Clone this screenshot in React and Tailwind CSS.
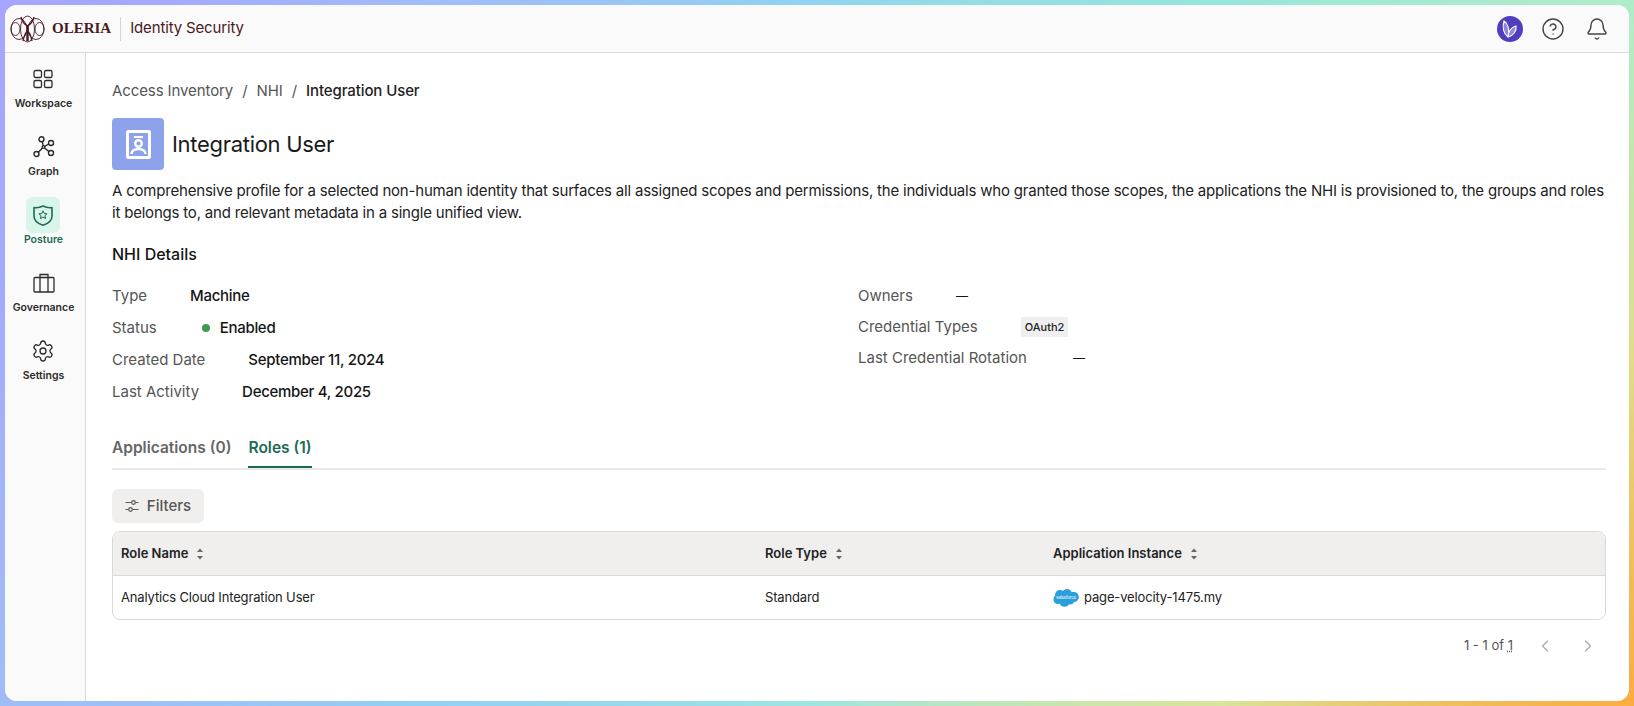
import { Bell, ChevronLeft, ChevronRight, CircleHelp, Settings } from "lucide-react";

const sans = "font-['Inter','Noto_Sans',sans-serif]";

function Logo() {
  return (
    <svg width="35" height="28" viewBox="0 0 35 28" fill="none" stroke="#4a1a22" strokeWidth="0.9">
      <ellipse cx="17.500" cy="14" rx="7" ry="13" />
      <ellipse cx="9" cy="14" rx="8" ry="10.500" />
      <ellipse cx="26" cy="14" rx="8" ry="10.500" />
      <ellipse cx="5.500" cy="14" rx="4.500" ry="6.500" />
      <ellipse cx="29.500" cy="14" rx="4.500" ry="6.500" />
      <path d="M17.500 10v16" strokeWidth="2.400" />
      <path d="M11 2c1 4 3 7 6.500 9M24 2c-1 4-3 7-6.500 9M13 26c1-5 2-8 4.500-10M22 26c-1-5-2-8-4.500-10" strokeWidth="1.400" />
    </svg>
  );
}

function WorkspaceIcon() {
  return (
    <svg width="20" height="20" viewBox="0 0 20 20" fill="none" stroke="#2b2b2b" strokeWidth="1.3">
      <rect x="1" y="1.500" width="7.500" height="7" rx="1.600" />
      <rect x="11.500" y="1.500" width="7.500" height="7" rx="1.600" />
      <rect x="1" y="11.500" width="7.500" height="7" rx="1.600" />
      <rect x="11.500" y="11.500" width="7.500" height="7" rx="1.600" />
    </svg>
  );
}

function GraphIcon() {
  return (
    <svg width="22" height="22" viewBox="0 0 22 22" fill="none" stroke="#2b2b2b" strokeWidth="1.4">
      <circle cx="8.500" cy="3.200" r="2.500" />
      <circle cx="18" cy="7" r="2.500" />
      <circle cx="3.500" cy="18" r="2.500" />
      <circle cx="18" cy="17" r="2.500" />
      <circle cx="10.500" cy="11" r="1.400" />
      <path d="M9.200 5.600l1 4M15.700 8l-4 2.300M5.300 16.300l4.200-4.300M11.600 12l4.400 3.600" />
    </svg>
  );
}

function PostureIcon() {
  return (
    <svg width="20" height="21" viewBox="0 0 20 21" fill="none" stroke="#1c6b54" strokeWidth="1.6">
      <path d="M1 2.500c3 .5 6 0 9-1.500 3 1.500 6 2 9 1.500V11c0 4.500-3.500 7.500-9 9.200C4.500 18.500 1 15.500 1 11z" strokeLinejoin="round" />
      <path d="M10 5.800l1.200 2.700 2.900.3-2.200 1.900.7 2.900-2.600-1.500-2.600 1.500.7-2.900-2.200-1.900 2.900-.3z" strokeWidth="1" strokeLinejoin="round" />
    </svg>
  );
}

function GovernanceIcon() {
  return (
    <svg width="22" height="20" viewBox="0 0 22 20" fill="none" stroke="#2b2b2b" strokeWidth="1.3">
      <rect x="1" y="4.500" width="20" height="14.500" rx="1" />
      <path d="M7 19V1.500h8V19" />
    </svg>
  );
}

function ProfileIcon() {
  return (
    <svg width="25" height="29" viewBox="0 0 25 29" fill="none" stroke="white" strokeWidth="3">
      <rect x="1.500" y="1.500" width="22" height="26" rx="1" />
      <path d="M8 7h9" strokeWidth="2.200" />
      <circle cx="12.500" cy="13.500" r="3.300" strokeWidth="2.400" />
      <path d="M5.500 24c0-3 3-5 7-5s7 2 7 5" strokeWidth="2.600" />
    </svg>
  );
}

function SliderIcon() {
  return (
    <svg width="14" height="14" viewBox="0 0 14 14" fill="none" stroke="#555" strokeWidth="1.200">
      <path d="M0.500 3.500h6M10.500 3.500h3M0.500 10.500h3M7.500 10.500h6" />
      <circle cx="8.500" cy="3.500" r="1.800" />
      <circle cx="5.500" cy="10.500" r="1.800" />
    </svg>
  );
}

function SortIcon() {
  return (
    <svg width="8" height="12" viewBox="0 0 8 12" fill="#666" className="ml-2">
      <path d="M4 0.500l3 3.500H1zM4 11.500l-3-3.500h6z" />
    </svg>
  );
}

function SalesforceIcon() {
  return (
    <svg width="26" height="18" viewBox="0 0 26 18">
      <g fill="#2a9fdc">
        <circle cx="7" cy="6" r="5" />
        <circle cx="14" cy="5" r="5" />
        <circle cx="20.500" cy="8" r="5.300" />
        <circle cx="5" cy="10.500" r="4.600" />
        <circle cx="11.500" cy="12.500" r="5.200" />
        <circle cx="17" cy="11.500" r="4" />
      </g>
      <text x="13" y="10.300" textAnchor="middle" fontSize="4.400" fill="white" fontFamily="Inter, sans-serif">salesforce</text>
    </svg>
  );
}

function NavItem({ icon, label, active }) {
  return (
    <div className="flex flex-col items-center">
      <div className={`w-[34px] h-[36px] flex items-center justify-center rounded-md ${active ? "bg-[#d9f5ea]" : ""}`}>
        {icon}
      </div>
      <span className={`-mt-[1px] text-[10.5px] leading-4 font-semibold ${active ? "text-[#1c6b54]" : "text-[#2b2b2b]"}`}>
        {label}
      </span>
    </div>
  );
}

function Row({ label, children }) {
  return (
    <div className="flex items-center gap-[43px] h-6 text-[15px]">
      <span className="text-[#555]">{label}</span>
      {children}
    </div>
  );
}

function Value({ children }) {
  return <span className="font-medium tracking-[-0.3px] text-[#151515]">{children}</span>;
}

function App() {
  return (
    <div className={`h-screen p-[5px] overflow-hidden bg-[conic-gradient(#90d4f0_0deg,#95e6dc_49deg,#b0ecc8_67deg,#dfdd8c_90deg,#fbac40_113deg,#d8e59b_131deg,#9fe6e0_180deg,#92d0f4_229deg,#a0bcf8_247deg,#a3aefc_270deg,#a6a4ff_293deg,#a0bcf8_311deg,#90d4f0_360deg)] ${sans}`}>
      <div className="h-full flex flex-col bg-white rounded-[12px] overflow-hidden">
        <header className="h-[48px] shrink-0 flex items-center justify-between bg-[#fafafa] border-b border-[#d9d9d9] pl-[5px] pr-[20px]">
          <div className="flex items-center">
            <Logo />
            <span className="ml-[7px] font-['Liberation_Serif',serif] font-bold text-[#4a1a22] text-[15px]">OLERIA</span>
            <div className="w-px h-6 bg-[#d4d4d4] mx-[9px]" />
            <span className="text-[15px] text-[#4a1a22] tracking-[-0.15px]">Identity Security</span>
          </div>
          <div className="flex items-center gap-[18px]">
            <div className="w-[26px] h-[26px] rounded-full bg-[#4f3fbf] flex items-center justify-center">
              <svg width="18" height="20" viewBox="0 0 18 20" fill="#8f85dc" stroke="white" strokeWidth="1.100">
                <path d="M7 18C2.500 15 1 8 3 2c4 2.500 6 9 4 16zM7 18c0-5 3-10 8-11 1 5-3 10-8 11z" />
              </svg>
            </div>
            <CircleHelp size={24} strokeWidth={1.4} className="text-[#444]" />
            <Bell size={24} strokeWidth={1.4} className="ml-[2px] text-[#444]" />
          </div>
        </header>
        <div className="flex flex-1 min-h-0">
          <aside className="w-[81px] shrink-0 bg-[#fafafa] border-r border-[#d9d9d9] flex flex-col items-center gap-[17px] pt-[8px] pr-[3px]">
            <NavItem icon={<WorkspaceIcon />} label="Workspace" />
            <NavItem icon={<GraphIcon />} label="Graph" />
            <NavItem icon={<PostureIcon />} label="Posture" active />
            <NavItem icon={<GovernanceIcon />} label="Governance" />
            <NavItem icon={<Settings size={24} strokeWidth={1.3} className="text-[#2b2b2b]" />} label="Settings" />
          </aside>
          <main className="flex-1 min-w-0 pl-[26px] pr-[23px] pt-[28px] flex flex-col">
            <div className="flex items-center text-[15px] leading-5 text-[#555] gap-[9px] tracking-[-0.1px]">
              <span>Access Inventory</span>
              <span>/</span>
              <span>NHI</span>
              <span>/</span>
              <span className="font-medium text-[#222]">Integration User</span>
            </div>
            <div className="flex items-center gap-2 mt-[17px]">
              <div className="w-[52px] h-[52px] rounded-[4px] bg-[#8da2ea] flex items-center justify-center">
                <ProfileIcon />
              </div>
              <h1 className="text-[22px] tracking-[-0.3px] text-[#1a1a1a]">Integration User</h1>
            </div>
            <p className="mt-[10px] text-[15px] leading-[22px] tracking-[-0.2px] text-[#222]">
              A comprehensive profile for a selected non-human identity that surfaces all assigned scopes and permissions, the individuals who granted those scopes, the applications the NHI is provisioned to, the groups and roles it belongs to, and relevant metadata in a single unified view.
            </p>
            <h2 className="mt-[18px] text-[16px] leading-6 font-medium text-[#151515]">NHI Details</h2>
            <div className="mt-[18px] flex">
              <div className="w-[746px] flex flex-col gap-2">
                <Row label="Type"><Value>Machine</Value></Row>
                <Row label="Status">
                  <span className="ml-[2px] flex items-center gap-[10px]">
                    <span className="w-2 h-2 rounded-full bg-[#3d9a50]" />
                    <Value>Enabled</Value>
                  </span>
                </Row>
                <Row label="Created Date"><Value>September 11, 2024</Value></Row>
                <Row label="Last Activity"><Value>December 4, 2025</Value></Row>
              </div>
              <div className="flex flex-col gap-[7px]">
                <Row label="Owners"><span className="text-[12px] font-medium text-[#151515]">—</span></Row>
                <Row label="Credential Types">
                  <span className="h-5 px-1 flex items-center bg-[#efefef] text-[11px] font-medium text-[#222]">OAuth2</span>
                </Row>
                <Row label="Last Credential Rotation"><span className="ml-[3px] text-[12px] font-medium text-[#151515]">—</span></Row>
              </div>
            </div>
            <div className="mt-[32px] flex gap-[17px] border-b-2 border-[#e8e8e8] text-[15.5px] font-semibold">
              <span className="h-[32px] text-[#666]">Applications (0)</span>
              <span className="h-[32px] -mb-[2px] text-[#1c6b54] border-b-2 border-[#1c6b54]">Roles (1)</span>
            </div>
            <button className="mt-[19px] self-start h-[34px] w-[92px] flex items-center justify-center gap-2 bg-[#f0efee] rounded-md text-[15px] font-medium text-[#555]">
              <SliderIcon />
              Filters
            </button>
            <div className="mt-[8px] border border-[#d9d9d9] rounded-lg overflow-hidden">
              <div className="grid grid-cols-[644px_288px_1fr] h-[44px] items-center px-[8px] bg-[#f0efee] border-b border-[#d9d9d9] text-[13px] font-semibold text-[#222]">
                <span className="flex items-center">Role Name<SortIcon /></span>
                <span className="flex items-center">Role Type<SortIcon /></span>
                <span className="flex items-center">Application Instance<SortIcon /></span>
              </div>
              <div className="grid grid-cols-[644px_288px_1fr] h-[43px] items-center px-[8px] text-[13px] tracking-[-0.15px] text-[#222]">
                <span>Analytics Cloud Integration User</span>
                <span>Standard</span>
                <span className="flex items-center gap-[5px]"><SalesforceIcon />page-velocity-1475.my</span>
              </div>
            </div>
            <div className="mt-[16px] pr-[7px] flex items-center justify-end text-[13px] text-[#555]">
              <span>1 - 1 of <span className="underline decoration-dotted">1</span></span>
              <ChevronLeft size={20} strokeWidth={1.5} className="ml-[22px] text-[#aaa]" />
              <ChevronRight size={20} strokeWidth={1.5} className="ml-[23px] mr-[1px] text-[#aaa]" />
            </div>
          </main>
        </div>
      </div>
    </div>
  );
}

export default App;
